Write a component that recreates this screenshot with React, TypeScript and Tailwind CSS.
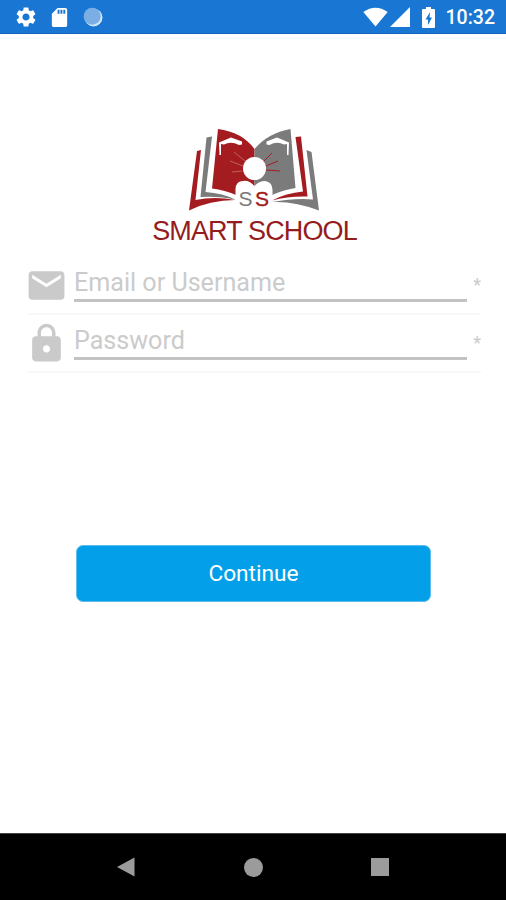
import { MdEmail, MdLock, MdSdCard, MdSettings } from "react-icons/md"

function StatusBar() {
  return (
    <header className="flex h-[34px] shrink-0 items-center justify-between border-b border-[#1767bd] bg-[#1976d2] pt-px pr-[11px] pl-[14px] text-white">
      <div className="flex items-center">
        <MdSettings className="size-[24px]" />
        <MdSdCard className="ml-[10px] size-[23px]" />
        <svg viewBox="0 0 20 20" className="ml-[12px] size-5">
          <circle cx="10.5" cy="10.5" r="9" fill="#d3e7fa" />
          <circle cx="9.2" cy="9.2" r="8.5" fill="#7aaee5" />
        </svg>
      </div>
      <div className="flex items-center">
        <svg viewBox="0 0 26 20" className="h-5 w-[26px]" fill="currentColor">
          <path d="M12.500 19.500.3 5Q12.500-3.500 24.700 5Z" />
        </svg>
        <svg viewBox="0 0 20 20" className="ml-[1px] h-5 w-5" fill="currentColor">
          <path d="M0 20 20 0V20Z" />
        </svg>
        <svg viewBox="0 0 13 21" className="ml-[12px] h-[21px] w-[13px]">
          <path d="M4 0h5v2h3q1 0 1 1v17q0 1-1 1H1q-1 0-1-1V3q0-1 1-1h3Z" fill="#fff" />
          <path d="M8 5 3.500 12.500H6V18l4-7.500H7.500Z" fill="#1976d2" />
        </svg>
        <span className="ml-[11px] pt-[2px] text-[19.5px] leading-none font-medium">10:32</span>
      </div>
    </header>
  )
}

function Logo() {
  return (
    <div className="flex flex-col items-center pl-[3px]">
      <svg viewBox="0 0 150 95" className="h-[95px] w-[150px]">
        {/* Left pages */}
        <path d="M17 31 21 30 15.500 80Q35 76 55 80 30 80 9 90.500Z" fill="#a51c20" />
        <path d="M26.500 17.500 32 16.500 25.500 72Q43 73 56 80 40 76 20.500 77Z" fill="#7b7b7b" />
        <path d="M38 9Q62 12 74.500 29V67L56 75Q45 70 32 68.500Z" fill="#a51c20" />
        {/* Right pages */}
        <path d="M74.500 29Q88 13 110.500 9L115.500 68Q103 70 92 75L74.500 67Z" fill="#7b7b7b" />
        <path d="M115.500 17 121 16.500 127.500 76.500Q108 76 92 80.500 106 73 123 71.500Z" fill="#a51c20" />
        <path d="M126.500 30 131.500 32 139 90.500Q115 81 92 82 115 78 133 79.500Z" fill="#7b7b7b" />
        {/* Graduation caps */}
        <g fill="#fff">
          <path d="M39 22.500 51 17.500 62 21.500V24.500L59 25Q51 21 44 24.500L41 24V35H39.500Z" />
          <path d="M109 22.500 97 17.500 86.500 21.500V24.500L89.500 25Q97 21 104 24.500L107 24V35H108.500Z" />
        </g>
        {/* Sun rays */}
        <g fill="none" strokeWidth="1">
          <path d="M54 32 65 41M50 41 63 46M52 52 62 51" stroke="#b96262" />
          <path d="M92 33 83 42M98 41 86 46M100 51 86 50" stroke="#a51c20" />
        </g>
        <circle cx="74.500" cy="48.500" r="11.500" fill="#fff" />
        <path d="M55.500 87V69Q56 61 63 61 69 60 74.500 66 79 61 85 61 92.500 62 92.500 70V87Z" fill="#fff" />
        <g fontSize="21" className="font-['Liberation_Sans',Arial,sans-serif]">
          <text x="58.500" y="85.500" fill="#777">S</text>
          <text x="75" y="85.500" fill="#a51c20" stroke="#a51c20" strokeWidth=".4">S</text>
        </g>
      </svg>
      <h1 className="mt-px font-['Liberation_Sans',Arial,sans-serif] text-[27px] leading-[30px] tracking-[-0.87px] whitespace-nowrap text-[#941c1c]">
        SMART SCHOOL
      </h1>
    </div>
  )
}

function Field({ icon: Icon, label, type }: { icon: typeof MdEmail; label: string; type: string }) {
  return (
    <div className="flex h-[58px] border-b-2 border-[#f8f8f8]">
      <Icon className="mt-[7px] -ml-[2px] size-[43px] shrink-0 text-[#cacaca]" />
      <input
        type={type}
        placeholder={label}
        aria-label={label}
        className="ml-[6px] h-[45px] w-[394px] border-b-[3px] border-[#c3c3c3] pt-[9px] text-[25.1px] outline-none placeholder:text-[#cbcbcb]"
      />
      <span className="mt-[16px] ml-[6px] text-[18px] leading-6 text-[#cacaca]">*</span>
    </div>
  )
}

function NavBar() {
  return (
    <nav className="flex h-[67px] shrink-0 items-center justify-center gap-[108px] border-t border-[#444] bg-black pr-px">
      <svg viewBox="0 0 20 20" className="size-5" fill="#9b9b9b">
        <path d="M1 10 18.500 .5V19.500Z" />
      </svg>
      <span className="size-[19px] rounded-full bg-[#9b9b9b]" />
      <span className="size-[18px] bg-[#9b9b9b]" />
    </nav>
  )
}

export default function App() {
  return (
    <div className="flex h-[900px] w-[506px] flex-col overflow-hidden bg-white font-[Roboto,sans-serif]">
      <StatusBar />
      <main className="flex flex-1 flex-col pt-[86px]">
        <Logo />
        <form className="mt-[11px] mr-[25px] ml-[27px]">
          <Field icon={MdEmail} label="Email or Username" type="text" />
          <Field icon={MdLock} label="Password" type="password" />
        </form>
        <button className="mt-[172px] ml-[76px] h-[57px] w-[355px] rounded-[7px] border border-[#5bbcef] bg-[#039fe8] pt-[2px] text-[22.7px] text-white">
          Continue
        </button>
      </main>
      <NavBar />
    </div>
  )
}
